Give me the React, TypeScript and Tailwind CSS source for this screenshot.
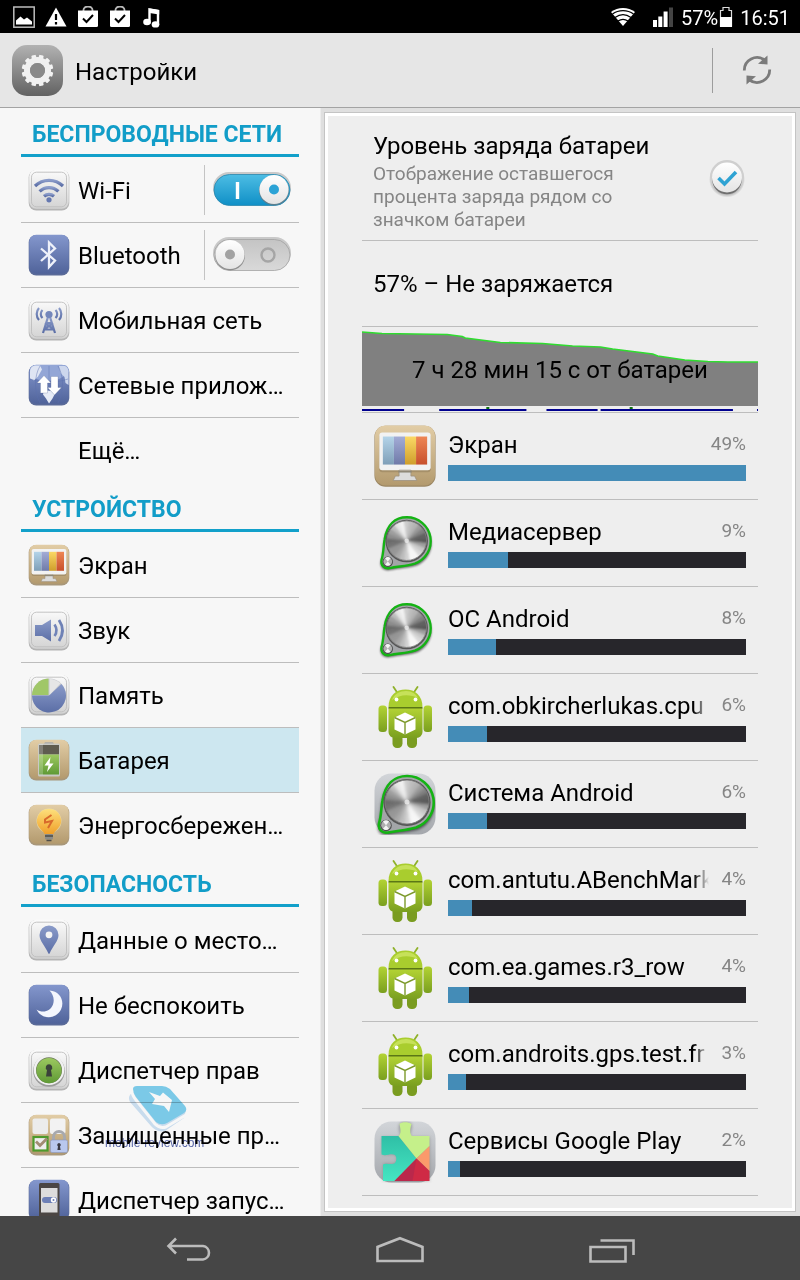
import { useState } from "react";
import type { ReactNode } from "react";

/* Shared gradients for every icon tile */
function Gradients() {
  const linear: [string, string, string][] = [
    ["light", "#fbfbfb", "#d3d3d3"],
    ["blue", "#8497cd", "#50639a"],
    ["tan", "#e2cda6", "#b39a6e"],
    ["glyph", "#8a9bc9", "#5b6ea6"],
    ["grey", "#b2b2b2", "#626262"],
    ["on", "#4dbde4", "#0f8fc6"],
    ["off", "#c4c4c4", "#d9d9d9"],
    ["knob", "#ffffff", "#e4e4e4"],
    ["droid", "#b3d334", "#7a9f1f"],
    ["leaf", "#9cc860", "#5f9a35"],
    ["bulb", "#fde07c", "#f0a02a"],
    ["silver", "#d2d5d9", "#a4a7ac"],
    ["teal", "#2fbfa6", "#45e6c2"],
    ["s1", "#b4d4e9", "#7f9fb8"],
    ["s2", "#a3acd6", "#6f7aa8"],
    ["s3", "#fbd864", "#cf9e2c"],
    ["s4", "#ee8654", "#c8502c"],
  ];
  return (
    <svg className="absolute size-0" aria-hidden="true">
      <defs>
        {linear.map(([id, from, to]) => (
          <linearGradient key={id} id={id} x1="0" y1="0" x2="0" y2="1">
            <stop offset="0" stopColor={from} />
            <stop offset="1" stopColor={to} />
          </linearGradient>
        ))}
        <radialGradient id="shade">
          <stop offset="0.7" stopColor="#000" stopOpacity="0.4" />
          <stop offset="1" stopColor="#000" stopOpacity="0" />
        </radialGradient>
        <filter id="soft" x="-20%" y="-20%" width="140%" height="140%">
          <feGaussianBlur stdDeviation="1.4" />
        </filter>
        <clipPath id="disc">
          <circle r="22" />
        </clipPath>
      </defs>
    </svg>
  );
}

function Tile({ tone, children }: { tone: "light" | "blue" | "tan"; children: ReactNode }) {
  const edge = tone === "light" ? "#b4b4b4" : tone === "blue" ? "#5a6a98" : "#a8977a";
  return (
    <svg viewBox="0 0 42 42" className="size-[42px] shrink-0" aria-hidden="true">
      <rect x="0.7" y="1" width="40.6" height="40.4" rx="7.5" fill={edge} />
      <rect x="1.2" y="0.8" width="39.6" height="39" rx="7" fill={`url(#${tone})`} />
      {tone === "light" && (
        <rect x="3.5" y="3.2" width="35" height="34.6" rx="5" fill="none" stroke="#bdbdbd" strokeWidth="0.9" />
      )}
      {children}
    </svg>
  );
}

function Monitor() {
  return (
    <g>
      <rect x="3.6" y="6" width="34.8" height="26" rx="2" fill="#8d7a58" opacity="0.5" />
      <rect x="3.6" y="5" width="34.8" height="25.6" rx="2" fill="#f2f2f2" />
      <rect x="6" y="7.8" width="7.5" height="19" fill="url(#s1)" />
      <rect x="13.5" y="7.8" width="7.5" height="19" fill="url(#s2)" />
      <rect x="21" y="7.8" width="7.5" height="19" fill="url(#s3)" />
      <rect x="28.5" y="7.8" width="7.5" height="19" fill="url(#s4)" />
      <path d="M17 30.6h8v4h2.5l1.5 3H13l1.5-3H17z" fill="#dcdcdc" stroke="#9a8f7c" strokeWidth="0.5" />
      <path d="M16.5 31h9v1.2h-9z" fill="#8f8877" />
    </g>
  );
}

const icons: Record<string, ReactNode> = {
  wifi: (
    <Tile tone="light">
      <g fill="none" stroke="url(#glyph)" strokeWidth="3.2">
        <path d="M7 17a20 20 0 0 1 28 0" />
        <path d="M11.6 22.4a13.5 13.5 0 0 1 18.800 0" />
        <path d="M16 27.200a7.5 7.5 0 0 1 10 0" />
      </g>
      <circle cx="21" cy="30.8" r="2.6" fill="#6578b0" />
    </Tile>
  ),
  bluetooth: (
    <Tile tone="blue">
      <path d="m13 14.500 14 12L21 33V8.500l6 6-14 12.500" fill="none" stroke="#eef1fa" strokeWidth="2.300" />
    </Tile>
  ),
  mobile: (
    <Tile tone="light">
      <g fill="none" stroke="url(#glyph)" strokeWidth="2.200">
        <path d="M14.500 11a5.500 5.500 0 0 0 0 8M27.500 11a5.500 5.500 0 0 1 0 8M11 9a9 9 0 0 0 0 12M31 9a9 9 0 0 1 0 12" />
        <path d="m20 18-5 16M22 18l5 16M17.500 24h7M16 30.500l9-6.500M26 30.500 17 24M16 30.500h10" />
        <path d="M12.500 34H18M24 34h5.500" strokeWidth="2.600" />
      </g>
      <circle cx="21" cy="15.500" r="3.600" fill="#7487bb" />
    </Tile>
  ),
  network: (
    <Tile tone="blue">
      <path d="M8 1h28c3 0 5 3 5 7l-8 6C26 18 12 18 2 12V8c0-5 2-7 6-7z" fill="#93a6d6" />
      <path d="M2 8c0-4 2-6 5-6.500h5l2 4-4 7-4 4-4-2z" fill="#dfe5f3" />
      <path d="M31 2h6c2.500 1 3.500 3 3.500 7v12l-3-2-1-6-4-4z" fill="#cdd7ed" />
      <path d="M12 2c-6 10-6 26 0 37M30 2c6 10 6 26 0 37M21 2v37M2 15c11 4 27 4 38 0" fill="none" stroke="#5a6fae" strokeOpacity="0.45" />
      <path d="m16 26 7 1 3.500 3.500-2 4-3.500 5-3-5-3-4z" fill="#e6ebf6" />
      <g fill="#fff" stroke="#51628f" strokeOpacity="0.5" strokeWidth="0.500">
        <path d="m16 11.500 7 7.500h-3.500v10h-7V19H9z" />
        <path d="m26.500 31-7-7.500H23v-11h7v11h3.500z" />
      </g>
    </Tile>
  ),
  screen: (
    <Tile tone="tan">
      <Monitor />
    </Tile>
  ),
  sound: (
    <Tile tone="light">
      <path d="M7 16h7l9-5.500v22L14 27H7z" fill="url(#glyph)" />
      <path d="M26.500 15.500q4 6 0 11.500" fill="none" stroke="#7083b8" strokeWidth="2.600" />
      <path d="M31 11q7 10.500 0 21" fill="none" stroke="#6f82b6" strokeWidth="2.800" />
    </Tile>
  ),
  memory: (
    <Tile tone="light">
      <circle cx="21" cy="21.500" r="17" fill="#c5c7cc" />
      <path d="M21 21.500 33.500 10A17 17 0 1 1 4 21.500z" fill="url(#glyph)" />
      <path d="M20.500 21V4.500A17 17 0 0 0 4 21z" fill="#a0c768" />
      <path d="M21.500 21V5a17 17 0 0 1 11 4.500z" fill="#e6e6e6" />
    </Tile>
  ),
  battery: (
    <Tile tone="tan">
      <path d="M16 5l1-1.800h8L26 5z" fill="#a9a9a9" />
      <rect x="10" y="4.500" width="22" height="33" rx="1.500" fill="#c9c9c4" />
      <rect x="11" y="6" width="20" height="9.500" fill="#5f5c50" />
      <rect x="11" y="15.500" width="20" height="20" fill="url(#leaf)" />
      <rect x="11" y="5" width="4" height="31" fill="#fff" opacity="0.22" />
      <path d="m22.500 18-6 8.500h4L19 33l6.500-8.500h-4z" fill="#fff" />
    </Tile>
  ),
  energy: (
    <Tile tone="tan">
      <circle cx="21" cy="17" r="12.500" fill="#fff1b0" opacity="0.500" />
      <path d="M21 5a11.700 11.700 0 0 1 8.500 20c-2 2-3.500 3.500-4 5h-9c-.5-1.500-2-3-4-5A11.700 11.700 0 0 1 21 5z" fill="url(#bulb)" />
      <path d="m23.500 11-6.500 4.500v3l7-1.500-4 7" fill="none" stroke="#d86a2b" strokeWidth="2" />
      <rect x="17" y="30" width="8" height="5.500" rx="1" fill="#8d8d88" />
      <path d="M17 32h8M18.500 36.500h5" stroke="#4c4c4a" strokeWidth="1.300" />
    </Tile>
  ),
  location: (
    <Tile tone="light">
      <path d="M21 6.500a9.500 9.500 0 0 1 9.500 9.500c0 6-5.500 10.500-9 18.800h-1C17 26.500 11.500 22 11.500 16A9.500 9.500 0 0 1 21 6.500z" fill="url(#glyph)" />
      <circle cx="21" cy="15.800" r="3.400" fill="#f3f3f3" />
    </Tile>
  ),
  moon: (
    <Tile tone="blue">
      <path d="M21.500 6.500C32 7 37 17 33 25.500 28.500 35 14 36.500 8.500 25.500c6 4 14 2 16.500-5 1.800-5.500 0-10.500-3.500-14z" fill="#f4f6fd" />
    </Tile>
  ),
  rights: (
    <Tile tone="light">
      <circle cx="21" cy="22" r="15.800" fill="#9b9b9b" />
      <circle cx="21" cy="20.800" r="15.300" fill="#f1f1f1" />
      <circle cx="21" cy="21.200" r="13" fill="#6c7a5a" />
      <circle cx="21" cy="21.600" r="12.600" fill="url(#leaf)" />
      <path d="M21 15.200a3.300 3.300 0 0 1 2 5.900l1 6.400h-6l1-6.400a3.300 3.300 0 0 1 2-5.900z" fill="#3b423a" />
    </Tile>
  ),
  shield: (
    <Tile tone="tan">
      <rect x="4.500" y="4.500" width="15.500" height="15.500" rx="2" fill="#ececec" />
      <rect x="22" y="4.500" width="15.500" height="15.500" rx="2" fill="#f2f2f2" />
      <rect x="5.500" y="23" width="14" height="13.500" fill="#eee" stroke="#4d9a2c" strokeWidth="2.200" />
      <path d="m8 27.500 4 4 7-7" fill="none" stroke="#a18c73" strokeWidth="2.800" />
      <path d="M25.500 27v-4a5.500 5.500 0 0 1 11 0v4" fill="none" stroke="#a7a9ae" strokeWidth="3" />
      <rect x="22.500" y="26" width="17" height="12.500" rx="1.500" fill="#b9c8ee" stroke="#8997bf" strokeWidth="0.600" />
      <path d="M31 29a1.900 1.900 0 0 1 1 3.400l.6 3.600h-3.200l.6-3.600a1.900 1.900 0 0 1 1-3.400z" fill="#3a3a44" />
    </Tile>
  ),
  launch: (
    <Tile tone="blue">
      <rect x="11" y="4" width="20.500" height="36" rx="1.500" fill="#4b4644" />
      <rect x="13" y="9" width="16.500" height="24.500" fill="#dcdcdc" />
      <rect x="14" y="18" width="15" height="6" rx="3" fill="#6c7fb6" />
      <circle cx="25.500" cy="21" r="2.700" fill="#fff" />
      <circle cx="25.500" cy="21" r="1" fill="#6c7fb6" />
    </Tile>
  ),
};

/* Brightness of the brushed disc, clockwise from the right */
const sheen = [0.35, 0.62, 0.78, 0.85, 0.97, 0.97, 0.82, 0.74, 0.66, 0.6, 0.58, 0.45, 0.42, 0.55, 0.62, 0.74, 0.9, 0.95, 0.8, 0.74, 0.7, 0.6, 0.5, 0.38];

function Knob({ plate = false }: { plate?: boolean }) {
  return (
    <svg viewBox="0 0 62 62" className="size-[62px] shrink-0" aria-hidden="true">
      {plate && <rect x="0.500" y="0.500" width="61" height="61" rx="17" fill="url(#silver)" />}
      <g transform={plate ? "translate(0 .5)" : "translate(3 3) scale(.9)"}>
        <path d="M33 5a26.500 26.500 0 0 1 11 51c-8 2.500-20 2.800-31 5.500C6 62 3 57 4.200 51.500 7 44 6.500 35 8 27 10.500 12 20 5 33 5z" fill="#000" opacity="0.600" filter="url(#soft)" />
        <path d="M33 2.500a26.500 26.500 0 0 1 9 51.500c-8 2.500-17 3-28 5-6 1-10-3-9-9 2.500-8 2-15 3.500-23C11 11 20 2.500 33 2.500z" fill="#a3a5a8" stroke="#14b314" strokeWidth="2.600" />
        <circle cx="33" cy="29" r="23.600" fill="#555" />
        <g transform="translate(33 28.500)">
          <g clipPath="url(#disc)">
            <circle r="24" fill="#aaa" />
            <g filter="url(#soft)">
              {sheen.map((level, i) => (
                <path key={i} d="M0 0 26-3.800V3.800z" transform={`rotate(${i * 15})`} fill={`rgb(${level * 255} ${level * 255} ${level * 255})`} />
              ))}
            </g>
            <circle r="2.500" fill="#fff" opacity="0.600" />
          </g>
          <circle r="22" fill="none" stroke="#777" strokeWidth="0.900" />
        </g>
        <circle cx="12" cy="52" r="5.800" fill="#4d4d4d" />
        <circle cx="12" cy="51.700" r="4.800" fill="#b0b0b0" />
        <path d="M12 51.700 9 48a4.800 4.800 0 0 1 6 0zM12 51.700l-3 3.600a4.800 4.800 0 0 0 6 0z" fill="#f4f4f4" />
      </g>
    </svg>
  );
}

function Droid() {
  return (
    <svg viewBox="0 0 62 62" className="size-[62px] shrink-0" aria-hidden="true">
      <path d="m19.500 1 4 6M43.500 1l-4 6" stroke="#8fb129" strokeWidth="1.800" strokeLinecap="round" />
      <rect x="18.500" y="48" width="10" height="14" rx="4.500" fill="#7a9c20" />
      <rect x="33" y="48" width="10" height="14" rx="4.500" fill="#7a9c20" />
      <rect x="4.500" y="19.500" width="8.500" height="26.500" rx="3.500" fill="url(#droid)" />
      <rect x="49.500" y="19.500" width="8.500" height="26.500" rx="3.500" fill="url(#droid)" />
      <path d="M14.500 22h34v24a6 6 0 0 1-6 6h-22a6 6 0 0 1-6-6z" fill="url(#droid)" />
      <path d="M14.500 21C14.500 9.500 22 3.500 31.500 3.500s17 6 17 17.500z" fill="#a9cd2e" />
      <path d="M18 14c2-6 8-9 14-9s10 3 12 7c-8-4-18-4-26 2z" fill="#d3ea6c" opacity="0.700" />
      <path d="M14.500 21h34v1.400h-34z" fill="#5b7716" />
      <circle cx="22.500" cy="13.500" r="1.900" fill="#fff" />
      <circle cx="41.500" cy="13.500" r="1.900" fill="#fff" />
      <path d="m31 26.500 10.500 5v12L31 48.500l-10.500-5v-12z" fill="#fff" />
      <path d="m20.500 31.500 10.500 5 10.500-5M31 36.500v12" fill="none" stroke="#7d9a2c" strokeWidth="1.400" />
    </svg>
  );
}

function PlayServices() {
  return (
    <svg viewBox="0 0 62 62" className="size-[62px] shrink-0" aria-hidden="true">
      <rect x="0.500" y="0.500" width="61" height="61" rx="17" fill="url(#silver)" />
      <path d="M8 16h18c2-3-3-7-.5-13 3-3 9-3 12 0 2 5-3 9-.5 13h18.500v44h-46V44c2-3 8 1 12-2 2-2 2-6 0-8-4-2-10 1-13-1z" fill="#666" opacity="0.500" filter="url(#soft)" />
      <path d="M7.500 15h17l18 22.500L20.500 60H9V43.500c3-2 9 1 12-1.500 1.800-2.500 1.800-6 0-8-4-2-9 1.500-13.500-.5z" fill="url(#teal)" />
      <path d="M24.500 15c3-2 2-7 1-12 2-2.500 9-2.500 12 0-1.500 5-2 9.500.5 12h17.500v10L42.500 37.500z" fill="#c5f08a" />
      <path d="M55.500 25v25L42.500 37.500z" fill="#fb9a6b" />
      <path d="M42.500 37.500 55.500 50v10h-35z" fill="#cf2a45" />
      <path d="m42.500 37.500-22 22.500h18z" fill="#a92750" opacity="0.550" />
    </svg>
  );
}

function ScreenApp() {
  return (
    <svg viewBox="0 0 42 42" className="size-[62px] shrink-0" aria-hidden="true">
      <rect x="0.300" y="0.500" width="41.400" height="41.300" rx="7.500" fill="#9c8763" />
      <rect x="0.600" y="0.300" width="40.800" height="40.600" rx="7" fill="url(#tan)" />
      <Monitor />
    </svg>
  );
}

/* Controls */
function Toggle({ id, label, initial }: { id: string; label: string; initial: boolean }) {
  const [on, setOn] = useState(initial);
  return (
    <span className="relative block h-9 w-20 shrink-0">
      <input
        id={id}
        type="checkbox"
        role="switch"
        aria-label={label}
        checked={on}
        onChange={() => setOn(!on)}
        className="absolute inset-0 size-full cursor-pointer opacity-0"
      />
      <svg viewBox="0 0 80 36" className="pointer-events-none block h-9 w-20" aria-hidden="true">
        <rect x="1" y="0" width="78" height="32" rx="16" fill="#c9c9c9" />
        <rect x="2" y="2.500" width="76" height="31" rx="15.500" fill={on ? "url(#on)" : "url(#off)"} stroke={on ? "#2a87ad" : "#a2a2a2"} strokeWidth="0.800" />
        {on ? (
          <g>
            <path d="M25.500 10v17" stroke="#fff" strokeWidth="3.400" />
            <circle cx="62" cy="18.500" r="15" fill="#5a7f90" />
            <circle cx="62" cy="17.500" r="14.600" fill="url(#knob)" />
            <circle cx="62" cy="17.500" r="5" fill="#2ba3d6" />
          </g>
        ) : (
          <g>
            <circle cx="56" cy="18" r="6.500" fill="none" stroke="#a5a5a5" strokeWidth="2.400" />
            <circle cx="18" cy="18.500" r="15" fill="#8d8d8d" />
            <circle cx="18" cy="17.500" r="14.600" fill="url(#knob)" />
            <circle cx="18" cy="17.500" r="5" fill="#a2a2a2" />
          </g>
        )}
      </svg>
    </span>
  );
}

type Item = { icon?: string; label: string; toggle?: boolean; active?: boolean };
const sections: { title: string; items: Item[] }[] = [
  {
    title: "БЕСПРОВОДНЫЕ СЕТИ",
    items: [
      { icon: "wifi", label: "Wi-Fi", toggle: true },
      { icon: "bluetooth", label: "Bluetooth", toggle: false },
      { icon: "mobile", label: "Мобильная сеть" },
      { icon: "network", label: "Сетевые прилож…" },
      { label: "Ещё…" },
    ],
  },
  {
    title: "УСТРОЙСТВО",
    items: [
      { icon: "screen", label: "Экран" },
      { icon: "sound", label: "Звук" },
      { icon: "memory", label: "Память" },
      { icon: "battery", label: "Батарея", active: true },
      { icon: "energy", label: "Энергосбережен…" },
    ],
  },
  {
    title: "БЕЗОПАСНОСТЬ",
    items: [
      { icon: "location", label: "Данные о место…" },
      { icon: "moon", label: "Не беспокоить" },
      { icon: "rights", label: "Диспетчер прав" },
      { icon: "shield", label: "Защищенные пр…" },
      { icon: "launch", label: "Диспетчер запус…" },
    ],
  },
];

const usage = [
  { icon: <ScreenApp />, name: "Экран", percent: 49, share: 100 },
  { icon: <Knob />, name: "Медиасервер", percent: 9, share: 20 },
  { icon: <Knob />, name: "ОС Android", percent: 8, share: 16 },
  { icon: <Droid />, name: "com.obkircherlukas.cpu", percent: 6, share: 13, fade: true },
  { icon: <Knob plate />, name: "Система Android", percent: 6, share: 13 },
  { icon: <Droid />, name: "com.antutu.ABenchMark", percent: 4, share: 8, fade: true },
  { icon: <Droid />, name: "com.ea.games.r3_row", percent: 4, share: 7 },
  { icon: <Droid />, name: "com.androits.gps.test.fr", percent: 3, share: 6, fade: true },
  { icon: <PlayServices />, name: "Сервисы Google Play", percent: 2, share: 4 },
];

function StatusBar() {
  const bag = (
    <svg viewBox="0 0 22 22" className="size-[22px]">
      <path d="M6.500 6V4a4.500 3.500 0 0 1 9 0v2" fill="none" stroke="#b8b8b8" strokeWidth="1.800" />
      <path d="M1 4.500h20v15a1.500 1.500 0 0 1-1.500 1.500h-17A1.500 1.500 0 0 1 1 19.500z" fill="#fff" />
      <path d="m6 12.500 3.500 3.500 6.500-7" fill="none" stroke="#000" strokeWidth="2" />
    </svg>
  );
  return (
    <div className="flex h-[33px] shrink-0 items-center justify-between bg-black pr-[10px] pl-[13px] text-[20px] leading-6 text-white">
      <div className="flex items-center gap-[10px]" aria-hidden="true">
        <svg viewBox="0 0 22 22" className="size-[22px]">
          <rect x="0.800" y="1" width="20.400" height="20.200" fill="none" stroke="#bdbdbd" strokeWidth="1.500" />
          <path d="M3 18.500v-4l4.500-4 3.500 3 3-2 5 4v3z" fill="#fff" />
        </svg>
        <svg viewBox="0 0 22 22" className="size-[22px]">
          <path d="M11 1.500 21.500 20.500H.5z" fill="#fff" />
          <path d="M11 8v6M11 16v2.500" stroke="#000" strokeWidth="2.200" />
        </svg>
        {bag}
        {bag}
        <svg viewBox="0 0 22 22" className="size-[22px]">
          <path d="M8.500 17.500V3.500l8.500 1.500v14" fill="none" stroke="#fff" strokeWidth="2.400" />
          <ellipse cx="6" cy="16" rx="3.800" ry="3.200" fill="#fff" />
          <ellipse cx="14.500" cy="18.400" rx="3.800" ry="3.200" fill="#fff" />
          <path d="M8.500 2.500 18.200 4v4.500l-9.700-1.500z" fill="#fff" />
        </svg>
      </div>
      <div className="flex items-center">
        <svg viewBox="0 0 24 20" className="h-5 w-6" aria-hidden="true">
          <path d="M12 19 0 5C7-.5 17-.5 24 5z" fill="#fff" />
          <path d="M1.500 7c6-4.500 15-4.500 21 0M4 10.500c5-3.500 11-3.500 16 0M7 14c3-2 7-2 10 0" fill="none" stroke="#000" strokeWidth="1.300" />
        </svg>
        <svg viewBox="0 0 20 22" className="ml-[18px] h-[22px] w-5" aria-hidden="true">
          <path d="M0 14h4v7H0zM5.300 10.500h4V21h-4zM10.600 5.500h4V21h-4z" fill="#fff" />
          <path d="M16 1.500h4V21h-4z" fill="#444" />
        </svg>
        <span className="ml-2 pt-[2px]">57%</span>
        <svg viewBox="0 0 14 22" className="ml-px h-[22px] w-[14px]" aria-hidden="true">
          <path d="M1.500 20V4.500H4v-3h6v3h2.500V20z" fill="none" stroke="#ddd" strokeWidth="1.200" />
          <path d="M1 11h12v10H1z" fill="#fff" />
        </svg>
        <span className="ml-[7px] pt-[2px]">16:51</span>
      </div>
    </div>
  );
}

function Header() {
  const teeth = Array.from({ length: 12 }, (_, i) => i * 30 + 15);
  return (
    <header className="flex h-[75px] shrink-0 items-center border-b border-[#a3a3a3] bg-[#e6e6e6] pr-[19px] pl-3">
      <svg viewBox="0 0 51 51" className="size-[51px]" aria-hidden="true">
        <rect width="51" height="51" rx="15" fill="url(#grey)" />
        <g transform="translate(25.500 25.500)">
          {teeth.map((angle) => (
            <rect key={angle} x="-2.300" y="-15.800" width="4.600" height="6" rx="0.900" fill="#f3f3f3" transform={`rotate(${angle})`} />
          ))}
          <circle r="10.500" fill="none" stroke="#f1f1f1" strokeWidth="6" />
          <circle r="7.500" fill="#8a8a8a" />
        </g>
      </svg>
      <h1 className="ml-3 flex-1 pt-[3px] text-[24px] leading-8 text-black">Настройки</h1>
      <div className="mr-5 h-[45px] w-px bg-[#9d9d9d]" />
      <button type="button" aria-label="Обновить" className="flex size-[48px] items-center justify-center">
        <svg viewBox="0 0 30 30" className="size-[30px]" aria-hidden="true">
          <g fill="none" stroke="#7b7b7b" strokeWidth="2.800">
            <path d="M2.300 15.500A12.700 12.700 0 0 1 22.500 5" />
            <path d="M27.700 14.500A12.700 12.700 0 0 1 7.500 25" />
          </g>
          <path d="M25.500.5v9l-9.500-.8zM4.500 29.500v-9l9.500.8z" fill="#7b7b7b" />
        </svg>
      </button>
    </header>
  );
}

function Sidebar() {
  return (
    <nav className="w-2/5 shrink-0 overflow-hidden bg-[#f7f7f7] px-[21px]">
      {sections.map((section) => (
        <section key={section.title}>
          <h2 className="mb-px flex h-[49px] items-center border-b-3 border-[#12a0ca] pt-[7px] pl-[11px] text-[23px] leading-7 font-bold whitespace-nowrap text-[#129dc8]">
            {section.title}
          </h2>
          <ul>
            {section.items.map((item) => (
              <li
                key={item.label}
                className={
                  item.active
                    ? "flex h-[65px] items-center border-b border-[#bdbdbd] bg-[#cde7f0] pl-[7px]"
                    : "flex h-[65px] items-center border-b border-[#bdbdbd] pl-[7px] last:border-transparent"
                }
              >
                {item.icon ? icons[item.icon] : <span className="size-[42px] shrink-0" />}
                <a href="#" className="ml-2 flex-1 pt-[2px] text-[24px] leading-8 whitespace-nowrap text-black">
                  {item.label}
                </a>
                {item.toggle !== undefined && (
                  <div className="flex items-center border-l border-[#c4c4c4] py-[7px] pr-[7px] pl-[7px]">
                    <Toggle id={item.label} label={item.label} initial={item.toggle} />
                  </div>
                )}
              </li>
            ))}
          </ul>
        </section>
      ))}
    </nav>
  );
}

function BatteryChart() {
  return (
    <div className="grid h-[86px] border-b border-[#bdbdbd]">
      <svg viewBox="0 0 395 85" preserveAspectRatio="none" className="col-start-1 row-start-1 h-[85px] w-full" aria-hidden="true">
        <path d="M0 5 20 6.500 85 7.500 100 9.500 103 11 138 15.500 180 16.500 210 19 238 20 250 22 270 24.500 290 27 295 29 322 33 345 34.500 365 35H395V79H0z" fill="#808080" />
        <path d="M0 5 20 6.500 85 7.500 100 9.500 103 11 138 15.500 180 16.500 210 19 238 20 250 22 270 24.500 290 27 295 29 322 33 345 34.500 365 35H395" fill="none" stroke="#2fdc2f" strokeWidth="1.700" />
        <path d="M124 80h3v2h-3zM267 80h3v2h-3z" fill="#107010" />
        <path d="M0 82h42v2H0zM77 82h87v2H77zM184 82h51v2h-51zM238 82h132v2H238zM394 82h1v2h-1z" fill="#00008f" />
      </svg>
      <p className="col-start-1 row-start-1 pt-[27px] text-center text-[24px] leading-8 text-black">7 ч 28 мин 15 с от батареи</p>
    </div>
  );
}

function BatteryPane() {
  const [shown, setShown] = useState(true);
  return (
    <main className="flex min-w-0 flex-1 border-l border-[#ececec] bg-[#dfdfdf] py-1 pr-1 pl-[3px]">
      <div className="flex min-w-0 flex-1 border border-[#c4c4c4]">
        <div className="min-w-0 flex-1 overflow-hidden border-3 border-white bg-[#eeeeee] px-[34px]">
          <div className="flex h-[125px] items-center justify-between border-b border-[#bdbdbd] pr-3 pl-[11px]">
            <label htmlFor="battery-level" className="w-[290px] pt-1">
              <span className="block text-[24px] leading-8 text-black">Уровень заряда батареи</span>
              <span className="block w-[260px] text-[19px] leading-[23px] text-[#858585]">
                Отображение оставшегося процента заряда рядом со значком батареи
              </span>
            </label>
            <span className="relative block size-[38px]">
              <input
                id="battery-level"
                type="checkbox"
                checked={shown}
                onChange={() => setShown(!shown)}
                className="absolute inset-0 size-full cursor-pointer opacity-0"
              />
              <svg viewBox="0 0 38 38" className="pointer-events-none block size-[38px]" aria-hidden="true">
                <circle cx="19" cy="20.500" r="18" fill="url(#shade)" />
                <circle cx="19" cy="18" r="17" fill="#cfcfcf" />
                <circle cx="19" cy="20.500" r="14.800" fill="#6f6f6f" />
                <circle cx="19" cy="18.500" r="15" fill="url(#knob)" />
                {shown && <path d="m10.500 19 6 6 11.500-12" fill="none" stroke="#2fa3d3" strokeWidth="3.600" />}
              </svg>
            </span>
          </div>
          <p className="flex h-[86px] items-center border-b border-[#bdbdbd] pl-[11px] text-[24px] leading-8 text-black">
            57% – Не заряжается
          </p>
          <BatteryChart />
          <ul>
            {usage.map((app) => (
              <li key={app.name} className="flex h-[87px] items-start gap-3 border-b border-[#bdbdbd] px-3 pt-3">
                {app.icon}
                <div className="min-w-0 flex-1 pt-1">
                  <div className="flex h-9 items-start justify-between">
                    <span
                      className={
                        app.fade
                          ? "w-[261px] overflow-hidden mask-[linear-gradient(to_right,black_94%,transparent)] text-[24px] leading-8 whitespace-nowrap text-black"
                          : "text-[24px] leading-8 whitespace-nowrap text-black"
                      }
                    >
                      {app.name}
                    </span>
                    <span className="shrink-0 text-[19px] leading-[30px] text-[#858585]">{app.percent}%</span>
                  </div>
                  <div className="h-4 bg-[#27262b]">
                    <div className="h-full bg-[#448cb7]" style={{ width: `${app.share}%` }} />
                  </div>
                </div>
              </li>
            ))}
          </ul>
        </div>
      </div>
    </main>
  );
}

function NavBar() {
  return (
    <div className="flex h-16 shrink-0 items-center justify-center bg-[#464646] pt-1">
      <button type="button" aria-label="Назад" className="flex h-full w-[212px] items-center justify-center">
        <svg viewBox="0 0 46 28" className="h-7 w-[46px]" fill="none" stroke="#bcbcbc" strokeWidth="2.600" aria-hidden="true">
          <path d="M11 2.500 3.500 10l7.500 7.500M3.500 10H38a6.800 6.800 0 0 1 0 13.500H22" />
        </svg>
      </button>
      <button type="button" aria-label="Домой" className="flex h-full w-[212px] items-center justify-center">
        <svg viewBox="0 0 50 28" className="h-7 w-[50px]" fill="none" stroke="#bcbcbc" strokeWidth="2.600" aria-hidden="true">
          <path d="M25 2.200 47.500 11v14h-45V11z" />
        </svg>
      </button>
      <button type="button" aria-label="Недавние" className="flex h-full w-[212px] items-center justify-center">
        <svg viewBox="0 0 46 28" className="h-7 w-[46px]" fill="none" stroke="#bcbcbc" strokeWidth="2.600" aria-hidden="true">
          <path d="M1.500 11h35v14.500h-35zM11.500 4.500h33V19" />
        </svg>
      </button>
    </div>
  );
}

function Watermark() {
  return (
    <div className="pointer-events-none absolute top-[1084px] left-[105px] mix-blend-multiply" aria-hidden="true">
      <svg viewBox="0 0 62 50" className="ml-[23px] h-[50px] w-[62px]">
        <path d="M5 8Q-1 12 2 18L23 42q6 7 14 5l19-13 2-8-20 8z" fill="#cfe3f5" />
        <path d="M4 7q0 4 4 9l19 24q5 5 11 3l20-12" fill="none" stroke="#fff" strokeWidth="3" />
        <path d="M5 5q0-3 4-3h25q4 0 8 3l15 17q3 4-1 7L39 39q-6 3-11-1L8 13Q5 9 5 5z" fill="#7fd0ef" />
        <path d="m21 8 11 4 3-3.500 9 7.500-3 12-5-6-12-2 3-5z" fill="#fff" />
      </svg>
      <span className="-mt-1 block font-['Liberation_Sans',sans-serif] text-[12px] leading-[26px] text-[#5a68ac]">mobile-review.com</span>
    </div>
  );
}

export default function App() {
  return (
    <div className="relative flex h-screen flex-col overflow-hidden bg-[#f7f7f7] font-[Roboto,'Noto_Sans',sans-serif]">
      <Gradients />
      <StatusBar />
      <Header />
      <div className="flex min-h-0 flex-1">
        <Sidebar />
        <BatteryPane />
      </div>
      <NavBar />
      <Watermark />
    </div>
  );
}
